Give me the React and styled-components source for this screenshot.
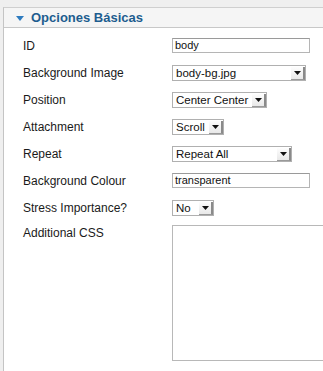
import React from 'react';
import styled, { createGlobalStyle } from 'styled-components';

const GlobalStyle = createGlobalStyle`
  html, body {
    margin: 0;
    padding: 0;
    background: #efefef;
    font-family: "Liberation Sans", Arial, sans-serif;
  }
`;

const fields = [
  { label: 'ID', type: 'input', value: 'body', width: 138 },
  { label: 'Background Image', type: 'select', value: 'body-bg.jpg', width: 134 },
  { label: 'Position', type: 'select', value: 'Center Center', width: 95 },
  { label: 'Attachment', type: 'select', value: 'Scroll', width: 52 },
  { label: 'Repeat', type: 'select', value: 'Repeat All', width: 120 },
  { label: 'Background Colour', type: 'input', value: 'transparent', width: 138 },
  { label: 'Stress Importance?', type: 'select', value: 'No', width: 42 },
];

const App = () => (
  <>
    <GlobalStyle />
    <Page>
      <Panel>
        <Header>
          <Toggle />
          <Title>Opciones Básicas</Title>
        </Header>
        <Body>
          {fields.map(f => (
            <Row key={f.label}>
              <Label>{f.label}</Label>
              {f.type === 'input' ? (
                <TextInput $width={f.width}>{f.value}</TextInput>
              ) : (
                <Select $width={f.width}>
                  <SelectText>{f.value}</SelectText>
                  <ArrowButton>
                    <svg width="7" height="4" viewBox="0 0 7 4">
                      <path d="M0 0h7L3.5 4z" fill="#111" />
                    </svg>
                  </ArrowButton>
                </Select>
              )}
            </Row>
          ))}
          <AreaRow>
            <Label>Additional CSS</Label>
            <TextArea />
          </AreaRow>
        </Body>
      </Panel>
    </Page>
  </>
);
export default App;

const Page = styled.div`
  width: 323px;
  height: 371px;
  overflow: hidden;
  padding: 7px 0 0 3px;
  box-sizing: border-box;
`;

const Panel = styled.div`
  background: #fff;
  border-left: 1px solid #c4c4c4;
  border-top: 1px solid #cfcfcf;
  height: 100%;
  width: 340px;
`;

const Header = styled.div`
  display: flex;
  align-items: center;
  height: 19px;
  background: #f5f5f5;
  border-bottom: 1px solid #c8c8c8;
  padding-left: 12px;
`;

const Toggle = styled.span`
  width: 0;
  height: 0;
  border-left: 4px solid transparent;
  border-right: 4px solid transparent;
  border-top: 5px solid #2e7bbf;
  margin-right: 7px;
  margin-top: 1px;
`;

const Title = styled.span`
  font-size: 13px;
  font-weight: bold;
  color: #1d5d8f;
`;

const Body = styled.div`
  padding: 4px 0 0 19px;
`;

const Row = styled.div`
  display: flex;
  align-items: center;
  height: 27px;
`;

const AreaRow = styled.div`
  display: flex;
  align-items: flex-start;
  padding-top: 5px;
`;

const Label = styled.div`
  width: 149px;
  font-size: 12px;
  line-height: 14px;
  color: #1a1a1a;
`;

const TextInput = styled.div`
  width: ${p => p.$width}px;
  height: 15px;
  box-sizing: border-box;
  border: 1px solid #b5b5b5;
  border-top-color: #9a9a9a;
  font-size: 11px;
  line-height: 13px;
  padding-left: 2px;
  color: #111;
  background: #fff;
`;

const Select = styled.div`
  display: flex;
  align-items: stretch;
  width: ${p => p.$width}px;
  height: 16px;
  box-sizing: border-box;
  border: 1px solid #b0b0b0;
  background: #fff;
`;

const SelectText = styled.span`
  flex: 1;
  font-size: 11.5px;
  line-height: 14px;
  padding-left: 3px;
  color: #111;
  white-space: nowrap;
  overflow: hidden;
`;

const ArrowButton = styled.span`
  width: 12px;
  margin-left: 2px;
  display: flex;
  align-items: center;
  justify-content: center;
  background: linear-gradient(#fdfdfd, #e8e8e8);
  border-right: 2px solid #8a8a8a;
  border-bottom: 1px solid #9a9a9a;
  margin-top: 1px;
`;

const TextArea = styled.div`
  width: 160px;
  height: 136px;
  box-sizing: border-box;
  border: 1px solid #b8b8b8;
  background: #fff;
  margin-top: -1px;
`;
